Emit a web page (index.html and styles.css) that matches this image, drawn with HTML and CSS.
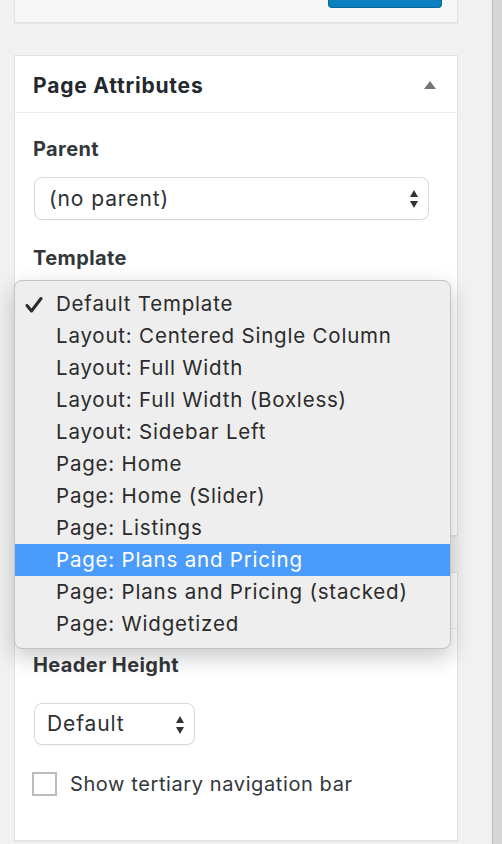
FILE: index.html
```html
<!DOCTYPE html>
<html lang="en">
<head>
<meta charset="utf-8">
<title>Page Attributes</title>
<link rel="stylesheet" href="styles.css">
</head>
<body>
<div class="screen">
  <div class="page">
    <div class="card card-top">
      <div class="publish-btn"></div>
    </div>

    <div class="card attrs">
      <div class="card-head">
        <h2 class="card-title">Page Attributes</h2>
        <span class="toggle"></span>
      </div>
      <div class="card-body attrs-body">
        <p class="label">Parent</p>
        <div class="select wide">
          <span class="select-text">(no parent)</span>
          <span class="arrows"><span class="up"></span><span class="down"></span></span>
        </div>
        <p class="label label-template">Template</p>
        <div class="select wide">
          <span class="select-text"></span>
          <span class="arrows"><span class="up"></span><span class="down"></span></span>
        </div>
      </div>
    </div>

    <div class="card options">
      <div class="card-head options-head"></div>
      <div class="card-body options-body">
        <p class="label">Header Height</p>
        <div class="select narrow">
          <span class="select-text">Default</span>
          <span class="arrows"><span class="up"></span><span class="down"></span></span>
        </div>
        <label class="check">
          <span class="box"></span>
          <span class="check-text">Show tertiary navigation bar</span>
        </label>
      </div>
    </div>

    <ul class="menu">
      <li class="item checked">
        <svg class="tick" width="18" height="18" viewBox="0 0 18 18"><path d="M2 9.5 L6.5 15 L16 2.5" fill="none" stroke="#2b2b2b" stroke-width="3" stroke-linecap="round" stroke-linejoin="round"/></svg>
        Default Template</li>
      <li class="item">Layout: Centered Single Column</li>
      <li class="item">Layout: Full Width</li>
      <li class="item">Layout: Full Width (Boxless)</li>
      <li class="item">Layout: Sidebar Left</li>
      <li class="item">Page: Home</li>
      <li class="item">Page: Home (Slider)</li>
      <li class="item">Page: Listings</li>
      <li class="item active">Page: Plans and Pricing</li>
      <li class="item">Page: Plans and Pricing (stacked)</li>
      <li class="item">Page: Widgetized</li>
    </ul>
  </div>
  <div class="scrollbar"></div>
</div>
</body>
</html>
```

FILE: styles.css
```css
* { box-sizing: border-box; }

html, body {
  margin: 0;
  padding: 0;
  background: #f1f1f1;
  font-family: Inter, "Noto Sans", "Liberation Sans", sans-serif;
  color: #2c2f33;
}

.screen {
  display: flex;
  width: 502px;
  height: 844px;
  overflow: hidden;
}

.page {
  position: relative;
  width: 492px;
  padding-left: 14px;
}

.scrollbar {
  width: 10px;
  background: #d6d6d6;
  border-left: 1px solid #bdbdbd;
}

.card {
  width: 444px;
  background: #fff;
  border: 1px solid #e2e2e2;
  box-shadow: 0 1px 1px rgba(0, 0, 0, 0.04);
}

.card-top {
  height: 23px;
  border-top: none;
  background: #f7f7f7;
  display: flex;
  justify-content: flex-end;
  align-items: flex-start;
  padding-right: 15px;
}

.publish-btn {
  width: 114px;
  height: 8px;
  background: #0a80bf;
  border: 1px solid #06679a;
  border-top: none;
  border-radius: 0 0 4px 4px;
}

.attrs { margin-top: 32px; }
.options { margin-top: 36px; }

.card-head {
  height: 57px;
  border-bottom: 1px solid #eeeeee;
  display: flex;
  align-items: center;
  justify-content: space-between;
  padding: 2px 21px 0 18px;
}

.options-head { height: 56px; }

.card-title {
  margin: 0;
  font-size: 21px;
  font-weight: 700;
  color: #23282d;
  letter-spacing: 0.8px;
}

.toggle {
  width: 0;
  height: 0;
  border-left: 6px solid transparent;
  border-right: 6px solid transparent;
  border-bottom: 8px solid #72777c;
}

.card-body {
  padding: 0 28px 0 18px;
}

.attrs-body {
  padding-top: 24px;
  height: 422px;
}

.options-body {
  padding-top: 24px;
  padding-bottom: 44px;
}

.label {
  margin: 0;
  font-size: 20px;
  line-height: 24px;
  font-weight: 700;
  color: #33373b;
  letter-spacing: 0.4px;
}

.label-template { margin-top: 26px; }

.select {
  margin-top: 16px;
  margin-left: 1px;
  height: 43px;
  display: flex;
  align-items: center;
  justify-content: space-between;
  padding: 0 10px 0 14px;
  background: #fff;
  border: 1px solid #d9d9d9;
  border-radius: 8px;
  box-shadow: 0 1px 1px rgba(0, 0, 0, 0.04);
}

.wide { width: 395px; }
.narrow { width: 161px; height: 42px; margin-top: 26px; padding-left: 12px; }

.select-text {
  font-size: 21px;
  line-height: 24px;
  color: #2c2f33;
  letter-spacing: 0.9px;
}

.arrows {
  display: flex;
  flex-direction: column;
  gap: 4px;
  margin-top: 1px;
}

.up, .down {
  width: 0;
  height: 0;
  border-left: 4.5px solid transparent;
  border-right: 4.5px solid transparent;
}

.up { border-bottom: 7px solid #333; }
.down { border-top: 7px solid #333; }

.check {
  margin-top: 27px;
  margin-left: -1px;
  display: flex;
  align-items: center;
  gap: 13px;
}

.box {
  width: 25px;
  height: 24px;
  border: 2px solid #b9bcbf;
  background: #fff;
}

.check-text {
  font-size: 20px;
  line-height: 24px;
  color: #32373c;
  letter-spacing: 0.6px;
}

.menu {
  position: absolute;
  top: 280px;
  left: 14px;
  width: 437px;
  margin: 0;
  padding: 7px 0 8px;
  list-style: none;
  background: #eeeeee;
  border: 1px solid #c3c3c3;
  border-radius: 8px;
  box-shadow: 0 8px 22px rgba(0, 0, 0, 0.22);
}

.item {
  position: relative;
  height: 32px;
  line-height: 32px;
  padding-left: 41px;
  font-size: 20.5px;
  color: #2b2b2b;
  white-space: nowrap;
  letter-spacing: 0.8px;
}

.item.active {
  background: #4b9bfa;
  color: #fff;
}

.tick {
  position: absolute;
  left: 10px;
  top: 8px;
}
```
